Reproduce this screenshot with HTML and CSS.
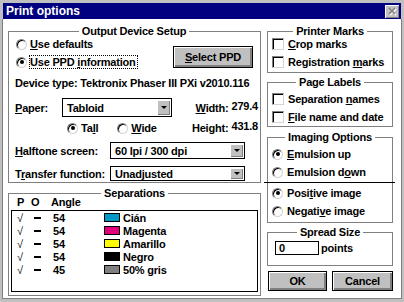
FILE: index.html
```html
<!DOCTYPE html>
<html lang="es">
<head>
  <meta charset="UTF-8">
  <title>Print options</title>
  <link rel="stylesheet" href="styles.css">
</head>
<body>
  <div class="window">
    <div class="titlebar">
      <span class="title">Print options</span>
      <span class="close">
        <svg width="12" height="11" viewBox="0 0 12 11">
          <path d="M3 2 L9 8 M9 2 L3 8" stroke="#fff" stroke-width="1.6" transform="translate(1 1)"/>
          <path d="M3 2 L9 8 M9 2 L3 8" stroke="#808080" stroke-width="1.6"/>
        </svg>
      </span>
    </div>

    <div class="client">
      <div class="col-left">
        <fieldset class="group setup">
          <legend>Output Device Setup</legend>
          <div class="setup-top">
            <div class="choices">
              <label class="opt"><span class="radio"></span><span><u>U</u>se defaults</span></label>
              <label class="opt"><span class="radio checked"></span><span class="focus">Use PPD <u>i</u>nformation</span></label>
            </div>
            <button class="btn ppd"><u>S</u>elect PPD</button>
          </div>
          <div class="device">Device type: Tektronix Phaser III PXi v2010.116</div>
          <div class="paper">
            <span class="lbl"><u>P</u>aper:</span>
            <div class="select"><span>Tabloid</span><span class="arrow"></span></div>
            <div class="dim"><span><u>W</u>idth:</span><span class="dim-val">279.4</span></div>
            <span></span>
            <div class="orient">
              <label class="opt"><span class="radio checked"></span><span>Ta<u>l</u>l</span></label>
              <label class="opt"><span class="radio"></span><span><u>W</u>ide</span></label>
            </div>
            <div class="dim"><span>Hei<u>g</u>ht:</span><span class="dim-val">431.8</span></div>
          </div>
          <div class="screen">
            <span class="lbl"><u>H</u>alftone screen:</span>
            <div class="select"><span>60 lpi / 300 dpi</span><span class="arrow"></span></div>
            <span class="lbl">T<u>r</u>ansfer function:</span>
            <div class="select"><span>Unadjusted</span><span class="arrow"></span></div>
          </div>
        </fieldset>

        <fieldset class="group seps">
          <legend>Separations</legend>
          <div class="sep-head"><span class="h-p">P</span><span class="h-o">O</span><span>Angle</span></div>
          <div class="list">
            <div class="item"><span class="chk">√</span><span class="dash"></span><span class="ang">54</span><span class="swatch cyan"></span>Cián</div>
            <div class="item"><span class="chk">√</span><span class="dash"></span><span class="ang">54</span><span class="swatch magenta"></span>Magenta</div>
            <div class="item"><span class="chk">√</span><span class="dash"></span><span class="ang">54</span><span class="swatch yellow"></span>Amarillo</div>
            <div class="item"><span class="chk">√</span><span class="dash"></span><span class="ang">54</span><span class="swatch black"></span>Negro</div>
            <div class="item"><span class="chk">√</span><span class="dash"></span><span class="ang">45</span><span class="swatch gray"></span>50% gris</div>
          </div>
        </fieldset>
      </div>

      <div class="col-right">
        <fieldset class="group side marks">
          <legend>Printer Marks</legend>
          <label class="opt"><span class="check"></span><span><u>C</u>rop marks</span></label>
          <label class="opt"><span class="check"></span><span>Registration <u>m</u>arks</span></label>
        </fieldset>

        <fieldset class="group side labels">
          <legend>Page Labels</legend>
          <label class="opt"><span class="check"></span><span>Separation <u>n</u>ames</span></label>
          <label class="opt"><span class="check"></span><span><u>F</u>ile name and date</span></label>
        </fieldset>

        <fieldset class="group side imaging">
          <legend>Imaging Options</legend>
          <label class="opt"><span class="radio checked"></span><span><u>E</u>mulsion up</span></label>
          <label class="opt"><span class="radio"></span><span>Emulsion d<u>o</u>wn</span></label>
          <div class="sep-line"></div>
          <label class="opt"><span class="radio checked"></span><span>Posi<u>t</u>ive image</span></label>
          <label class="opt"><span class="radio"></span><span>Negati<u>v</u>e image</span></label>
        </fieldset>

        <fieldset class="group side spread">
          <legend>Spread Size</legend>
          <div class="spread-row"><span class="field">0</span><span>points</span></div>
        </fieldset>

        <div class="actions">
          <button class="btn ok">OK</button>
          <button class="btn cancel">Cancel</button>
        </div>
      </div>
    </div>
  </div>
</body>
</html>
```

FILE: styles.css
```css
* {
  margin: 0;
  padding: 0;
  box-sizing: border-box;
}

body {
  font-family: 'Liberation Sans', Arial, sans-serif;
  font-size: 11px;
  font-weight: bold;
  letter-spacing: -0.2px;
  color: #000;
  background: #c0c0c0;
}

.window {
  width: 404px;
  height: 302px;
  background: #c0c0c0;
  padding: 2px 2px 3px;
  display: flex;
  flex-direction: column;
}

.titlebar {
  height: 16px;
  margin: 1px 1px 0;
  background: #000080;
  color: #fff;
  display: flex;
  align-items: center;
  padding-left: 3px;
}

.title {
  font-size: 12px;
  letter-spacing: 0;
}

.close {
  margin-left: auto;
  margin-right: 2px;
  width: 14px;
  height: 13px;
  background: #c0c0c0;
  box-shadow: inset 1px 1px #fff, inset -1px -1px #808080;
  display: flex;
  align-items: center;
  justify-content: center;
}

.client {
  flex: 1;
  background: #fff;
  border: 1px solid #808080;
  border-top: none;
  padding: 6px 8px 0 5px;
  display: grid;
  grid-template-columns: 253px 126px;
  column-gap: 6px;
  align-items: start;
  white-space: nowrap;
}

/* group boxes */
.group {
  border: 1px solid #808080;
  min-width: 0;
}

.group legend {
  margin: 0 auto;
  padding: 0 3px;
  line-height: 12px;
}

.opt {
  display: flex;
  align-items: center;
  gap: 3px;
  height: 14px;
  line-height: 14px;
}

.radio {
  width: 11px;
  height: 11px;
  flex: none;
  border-radius: 50%;
  border: 1px solid;
  border-color: #808080 #d4d4d4 #d4d4d4 #808080;
  box-shadow: inset 1px 1px #000;
  background: #fff;
  display: flex;
  align-items: center;
  justify-content: center;
}

.radio.checked::after {
  content: '';
  width: 4px;
  height: 4px;
  border-radius: 50%;
  background: #000;
}

.check {
  width: 12px;
  height: 12px;
  flex: none;
  border: 1px solid;
  border-color: #808080 #d4d4d4 #d4d4d4 #808080;
  box-shadow: inset 1px 1px #000;
  background: #fff;
}

.side .opt {
  gap: 4px;
}

.btn {
  font: inherit;
  letter-spacing: inherit;
  color: #000;
  background: #c0c0c0;
  border: 1px solid #000;
  box-shadow: inset 1px 1px #fff, inset -1px -1px #808080, inset -2px -2px #808080;
}

/* output device setup */
.setup {
  padding: 0 7px 1px 6px;
}

.setup-top {
  display: flex;
  justify-content: space-between;
}

.choices {
  display: flex;
  flex-direction: column;
  gap: 4px;
  margin-left: 1px;
}

.focus {
  border: 1px dotted #000;
  margin-left: -1px;
  padding-right: 1px;
  line-height: 12px;
}

.ppd {
  width: 80px;
  height: 22px;
  margin-top: 9px;
}

.device {
  margin-top: 7px;
  line-height: 14px;
}

.paper {
  margin-top: 8px;
  display: grid;
  grid-template-columns: 47px 110px 1fr;
  grid-template-rows: 19px 14px;
  row-gap: 4px;
  align-items: center;
}

.select {
  height: 100%;
  border: 1px solid #000;
  display: flex;
  align-items: center;
  padding-left: 4px;
}

.arrow {
  margin: 1px 1px 1px auto;
  width: 13px;
  align-self: stretch;
  background: #c0c0c0;
  box-shadow: inset 1px 1px #fff, inset -1px -1px #808080;
  display: flex;
  align-items: center;
  justify-content: center;
}

.arrow::after {
  content: '';
  border-left: 3px solid transparent;
  border-right: 3px solid transparent;
  border-top: 3px solid #000;
}

.dim {
  display: flex;
  justify-content: flex-end;
  align-items: center;
  gap: 3px;
  margin-right: -5px;
}

.dim-val {
  margin-bottom: 4px;
}

.orient {
  display: flex;
  gap: 19px;
  padding-left: 5px;
}

.screen {
  margin-top: 7px;
  display: grid;
  grid-template-columns: 95px 135px;
  grid-template-rows: 17px 15px;
  row-gap: 7px;
  align-items: center;
}

/* separations */
.seps {
  margin-top: 4px;
  padding: 0 2px 3px;
}

.sep-head {
  margin-top: -3px;
  line-height: 12px;
  padding-left: 6px;
}

.sep-head span {
  display: inline-block;
}

.h-p {
  width: 14px;
}

.h-o {
  width: 20px;
}

.list {
  margin-top: 2px;
  height: 82px;
  border: 1px solid #000;
  padding-left: 5px;
}

.item {
  display: flex;
  align-items: center;
  height: 13px;
}

.chk {
  width: 17px;
  font-weight: normal;
}

.dash {
  width: 7px;
  height: 2px;
  background: #000;
  margin-right: 12px;
}

.ang {
  width: 51px;
}

.swatch {
  width: 16px;
  height: 9px;
  border: 1px solid #000;
  margin-right: 3px;
}

.cyan { background: #0099c6; }
.magenta { background: #e0007c; }
.yellow { background: #ffff00; }
.black { background: #000; }
.gray { background: #808080; }

/* right column */
.col-right {
  display: flex;
  flex-direction: column;
}

.side {
  padding: 0 4px;
  display: flex;
  flex-direction: column;
  gap: 4px;
}

.marks {
  padding-bottom: 3px;
}

.labels {
  margin-top: 3px;
  padding-top: 4px;
  padding-bottom: 2px;
}

.imaging {
  margin-top: 4px;
  padding-top: 4px;
  padding-bottom: 4px;
}

.imaging .sep-line {
  height: 1px;
  background: #000;
  margin: -1px -7px 0 -8px;
}

.imaging .sep-line + .opt {
  margin-top: -1px;
}

.spread {
  margin-top: 3px;
  padding-top: 3px;
  padding-bottom: 10px;
}

.spread-row {
  display: flex;
  align-items: center;
  gap: 2px;
  padding-left: 3px;
}

.field {
  width: 44px;
  height: 14px;
  line-height: 12px;
  border: 1px solid #000;
  padding-left: 3px;
}

.actions {
  margin-top: 5px;
  display: flex;
  gap: 5px;
  padding-left: 1px;
}

.ok {
  width: 60px;
  height: 20px;
}

.cancel {
  width: 61px;
  height: 20px;
  flex: none;
}
```
